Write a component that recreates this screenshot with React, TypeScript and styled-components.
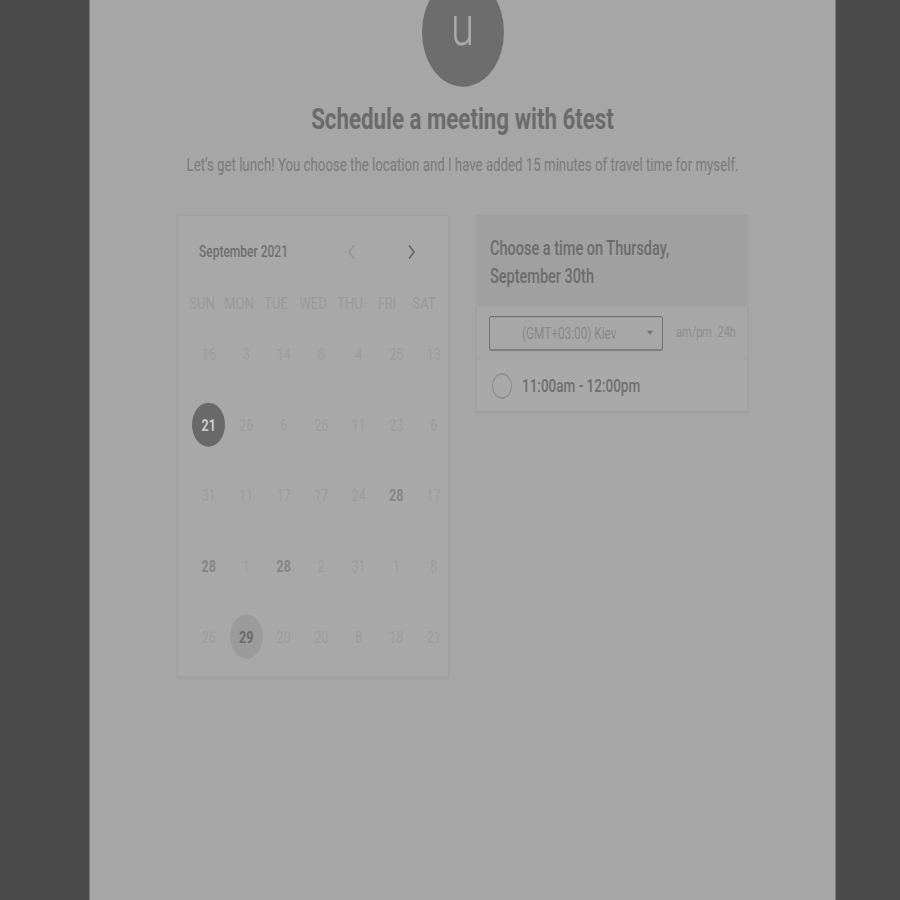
import React from 'react';
import styled, { createGlobalStyle } from 'styled-components';

// the screenshot is stretched vertically; lay out at natural size and scale
const STRETCH = 1.3333;

type Day = { n: number; state?: 'off' | 'on' | 'picked' | 'today' };

const WEEKDAYS = ['SUN', 'MON', 'TUE', 'WED', 'THU', 'FRI', 'SAT'];

const WEEKS: Day[][] = [
  [{ n: 16 }, { n: 3 }, { n: 14 }, { n: 6 }, { n: 4 }, { n: 25 }, { n: 13 }],
  [{ n: 21, state: 'picked' }, { n: 26 }, { n: 6 }, { n: 26 }, { n: 11 }, { n: 23 }, { n: 6 }],
  [{ n: 31 }, { n: 11 }, { n: 17 }, { n: 17 }, { n: 24 }, { n: 28, state: 'on' }, { n: 17 }],
  [{ n: 28, state: 'on' }, { n: 1 }, { n: 28, state: 'on' }, { n: 2 }, { n: 31 }, { n: 1 }, { n: 8 }],
  [{ n: 26 }, { n: 29, state: 'today' }, { n: 20 }, { n: 20 }, { n: 8 }, { n: 18 }, { n: 21 }],
];

const GlobalStyle = createGlobalStyle`
  html {
    overflow: hidden;
    background: #4a4a4a;
  }
  body {
    margin: 0;
    padding: 0;
    height: 100vh;
    font-family: Roboto, "Noto Sans", sans-serif;
  }
`;

const Panel = styled.div`
  box-sizing: border-box;
  width: 747px;
  height: 680px;
  margin-left: 89px;
  background: #a6a6a6;
  border-left: 1px solid #7a7a7a;
  border-right: 1px solid #7a7a7a;
  overflow: hidden;
  display: flex;
  flex-direction: column;
  align-items: center;
  transform: scaleY(${STRETCH});
  transform-origin: top left;
`;

const Avatar = styled.div`
  width: 82px;
  height: 82px;
  margin-top: -17px;
  border-radius: 50%;
  background: #6d6d6d;
  color: #ababab;
  display: flex;
  align-items: center;
  justify-content: center;
  font-size: 42px;
  font-weight: 300;
  line-height: 24px;
  padding-bottom: 8px;
  box-sizing: border-box;
`;

const Title = styled.h1`
  margin: 12px 0 0;
  font-size: 22.3px;
  line-height: 24px;
  font-weight: 700;
  color: #6b6b6b;
`;

const Intro = styled.p`
  margin: 15px 0 0;
  font-size: 13.25px;
  line-height: 16px;
  color: #7a7a7a;
`;

const Cards = styled.div`
  margin-top: 29px;
  display: flex;
  gap: 27px;
  align-items: flex-start;
`;

const Card = styled.div`
  box-sizing: border-box;
  width: 272px;
  background: #a8a8a8;
  border: 1px solid #a0a0a0;
  box-shadow: 0 1px 2px rgba(0, 0, 0, 0.06);
`;

const CalendarCard = styled(Card)`
  height: 347px;
`;

const MonthBar = styled.div`
  height: 53px;
  display: flex;
  align-items: center;
  padding: 0 31px 0 21px;
`;

const MonthLabel = styled.span`
  flex: 1;
  font-size: 12px;
  font-weight: 500;
  color: #6f6f6f;
`;

const NavButton = styled.span<{ $dim?: boolean }>`
  display: inline-flex;
  width: 12px;
  justify-content: center;
  margin-left: ${(p) => (p.$dim ? 0 : 48)}px;
  color: ${(p) => (p.$dim ? '#939393' : '#626262')};
`;

const Grid = styled.div`
  display: grid;
  grid-template-columns: repeat(7, 37.5px);
  padding-left: 12px;
`;

const WeekdayRow = styled(Grid)`
  height: 24px;
  align-items: center;
  grid-template-columns: repeat(7, 37px);
`;

const Weekday = styled.span`
  width: 24px;
  display: flex;
  justify-content: center;
  font-size: 13px;
  color: #999999;
  white-space: nowrap;
`;

const WeekRow = styled(Grid)`
  height: 53px;
  align-items: center;
`;

const DayCell = styled.span<{ $state?: Day['state'] }>`
  justify-self: center;
  width: 33px;
  height: 33px;
  border-radius: 50%;
  display: flex;
  align-items: center;
  justify-content: center;
  font-size: 12.5px;
  font-weight: ${(p) => (p.$state && p.$state !== 'off' ? 700 : 400)};
  color: ${(p) =>
    p.$state === 'picked'
      ? '#cbcbcb'
      : p.$state === 'today'
      ? '#6a6a6a'
      : p.$state === 'on'
      ? '#858585'
      : '#9c9c9c'};
  background: ${(p) =>
    p.$state === 'picked' ? '#696969' : p.$state === 'today' ? '#9b9b9b' : 'transparent'};
`;

const TimesCard = styled(Card)`
  height: 148px;
`;

const TimesHeader = styled.div`
  background: #a0a0a0;
  padding: 13.5px 13px 11px;
  font-size: 14.5px;
  line-height: 21.4px;
  font-weight: 500;
  color: #6c6c6c;
  border-bottom: 1px solid #a3a3a3;
`;

const ZoneRow = styled.div`
  display: flex;
  align-items: center;
  height: 39px;
  padding-left: 12px;
  background: #a7a7a7;
  border-bottom: 1px solid #a4a4a4;
`;

const ZoneSelect = styled.div`
  box-sizing: border-box;
  width: 174px;
  height: 26px;
  border: 1px solid #717171;
  border-radius: 2px;
  display: flex;
  align-items: center;
  padding: 0 9px 0 32px;
  font-size: 11.8px;
  color: #888888;
`;

const ZoneName = styled.span`
  flex: 1;
`;

const Caret = styled.span`
  width: 0;
  height: 0;
  border-left: 3px solid transparent;
  border-right: 3px solid transparent;
  border-top: 3px solid #707070;
`;

const Formats = styled.span`
  margin-left: 13px;
  font-size: 11px;
  color: #8d8d8d;
  white-space: pre;
`;

const SlotRow = styled.div`
  display: flex;
  align-items: center;
  height: 38px;
  padding-left: 15px;
  background: #a9a9a9;
`;

const Radio = styled.span`
  box-sizing: border-box;
  width: 20px;
  height: 19px;
  border-radius: 50%;
  border: 1.5px solid #8b8b8b;
  margin-right: 10px;
`;

const SlotText = styled.span`
  font-size: 13.5px;
  font-weight: 500;
  color: #6e6e6e;
`;

const Chevron = ({ dir }: { dir: 'left' | 'right' }) => (
  <svg width="9" height="12" viewBox="0 0 9 12" fill="none">
    <path
      d={dir === 'left' ? 'M7 1 L2 6 L7 11' : 'M2 1 L7 6 L2 11'}
      stroke="currentColor"
      strokeWidth="1.4"
    />
  </svg>
);

export default function App() {
  return (
    <>
      <GlobalStyle />
      <Panel>
        <Avatar>u</Avatar>
        <Title>Schedule a meeting with 6test</Title>
        <Intro>
          Let’s get lunch! You choose the location and I have added 15 minutes of travel time for
          myself.
        </Intro>
        <Cards>
          <CalendarCard>
            <MonthBar>
              <MonthLabel>September 2021</MonthLabel>
              <NavButton $dim>
                <Chevron dir="left" />
              </NavButton>
              <NavButton>
                <Chevron dir="right" />
              </NavButton>
            </MonthBar>
            <WeekdayRow>
              {WEEKDAYS.map((d) => (
                <Weekday key={d}>{d}</Weekday>
              ))}
            </WeekdayRow>
            {WEEKS.map((week, i) => (
              <WeekRow key={i}>
                {week.map((day, j) => (
                  <DayCell key={j} $state={day.state}>
                    {day.n}
                  </DayCell>
                ))}
              </WeekRow>
            ))}
          </CalendarCard>
          <TimesCard>
            <TimesHeader>
              Choose a time on Thursday,
              <br />
              September 30th
            </TimesHeader>
            <ZoneRow>
              <ZoneSelect>
                <ZoneName>(GMT+03:00) Kiev</ZoneName>
                <Caret />
              </ZoneSelect>
              <Formats>am/pm  24h</Formats>
            </ZoneRow>
            <SlotRow>
              <Radio />
              <SlotText>11:00am - 12:00pm</SlotText>
            </SlotRow>
          </TimesCard>
        </Cards>
      </Panel>
    </>
  );
}
